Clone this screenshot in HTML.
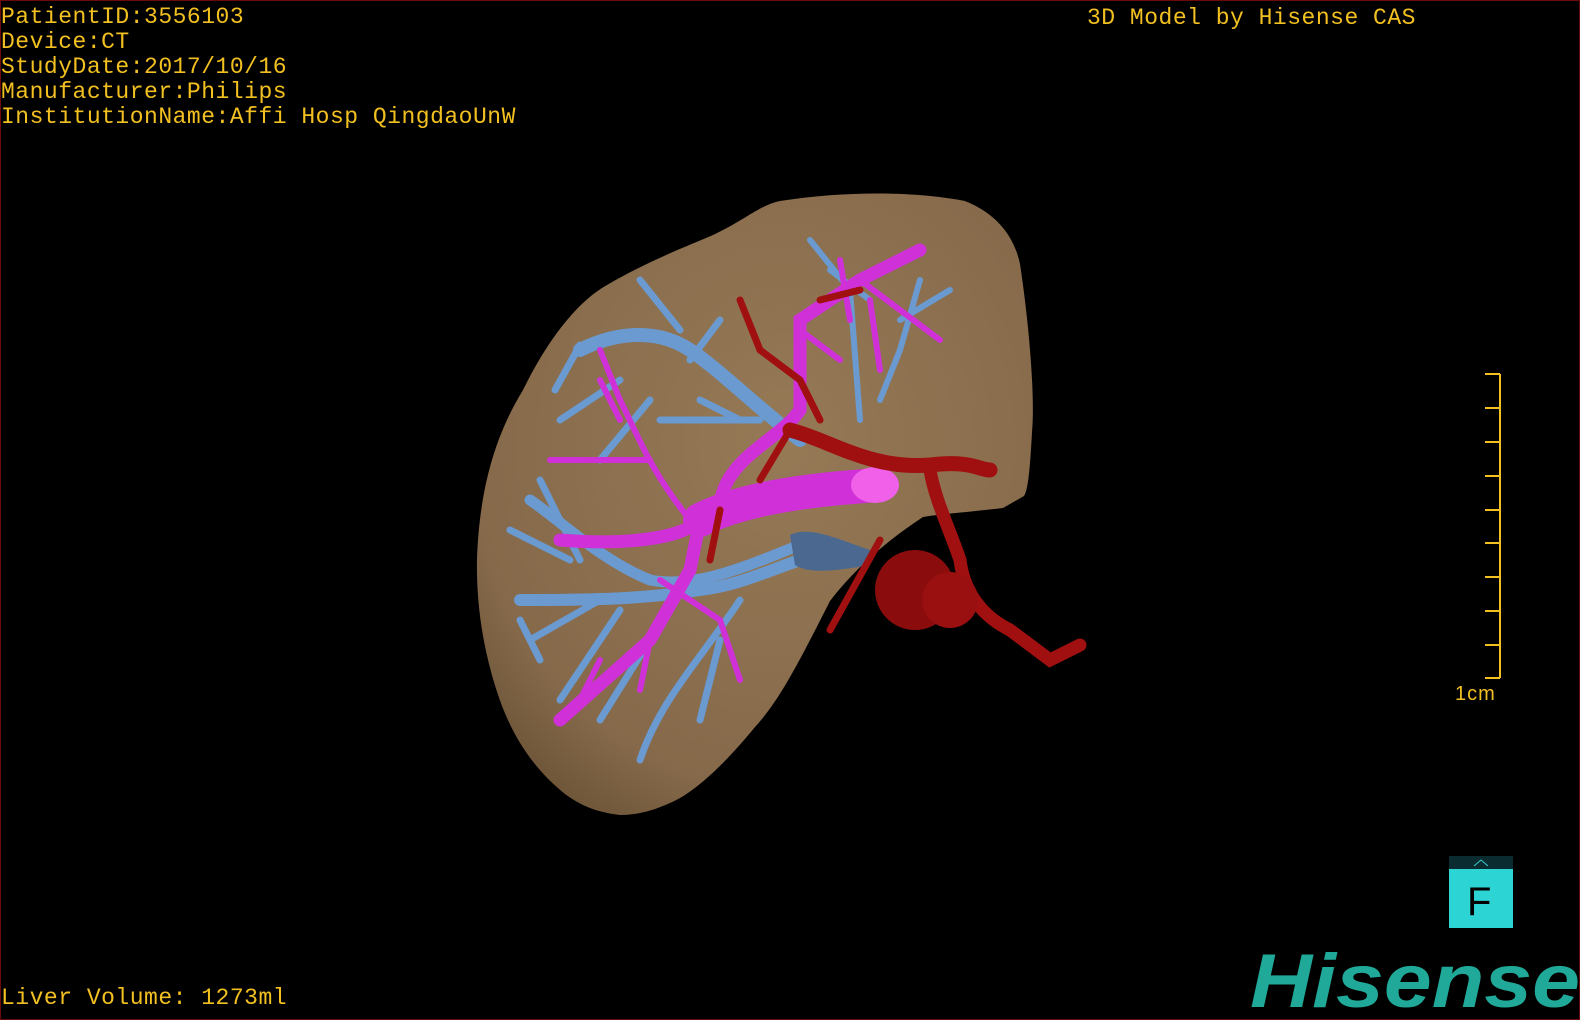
<!DOCTYPE html>
<html><head><meta charset="utf-8"><style>
html,body{margin:0;padding:0;background:#000;}
#f{position:relative;width:1578px;height:1018px;border:1px solid #6a0a0a;overflow:hidden;background:#000;font-family:"Liberation Mono",monospace;color:#f2c020;}
.t{position:absolute;font-size:23px;line-height:25px;white-space:pre;letter-spacing:0.5px}
</style></head><body><div id="f">
<div class="t" style="left:0;top:4px">PatientID:3556103
Device:CT
StudyDate:2017/10/16
Manufacturer:Philips
InstitutionName:Affi Hosp QingdaoUnW</div>
<div class="t" style="left:1086px;top:5px">3D Model by Hisense CAS</div>
<div class="t" style="left:0;top:985px">Liver Volume: 1273ml</div>
<svg width="1580" height="1020" style="position:absolute;left:-1px;top:-1px">
<defs><radialGradient id="lg" cx="0.55" cy="0.4" r="0.7"><stop offset="0" stop-color="#967a56"/><stop offset="0.8" stop-color="#85694a"/><stop offset="1" stop-color="#6e5538"/></radialGradient></defs>
<path d="M477,559 C480,470 505,420 523,390 C550,335 580,300 607,285 C650,260 690,245 713,235 C745,220 760,205 780,201 C850,190 920,192 965,201 C1000,215 1015,240 1020,264 C1030,330 1035,400 1032,432 C1030,470 1028,490 1024,496 L1003,508 C970,512 940,514 923,517 C880,545 850,575 830,601 C800,660 780,700 755,727 C720,770 690,795 670,803 C650,812 635,815 620,815 C595,812 580,805 565,794 C535,770 515,740 502,706 C485,660 476,610 477,559Z" fill="url(#lg)"/>
<g fill="none" stroke-linecap="round" stroke="#6a9ad0">
<path d="M580,350 C620,330 660,330 690,350 C720,370 760,410 800,440" stroke-width="14"/>
<path d="M640,280 L680,330 M580,345 L555,390 M620,380 L560,420 M650,400 L600,460 M690,360 L720,320 M700,400 L740,420 M660,420 L760,420" stroke-width="7"/>
<path d="M530,500 C560,520 600,560 650,580 C700,590 760,560 800,545" stroke-width="11"/>
<path d="M520,600 C580,600 640,600 700,590 C740,585 770,570 800,560" stroke-width="12"/>
<path d="M540,480 L580,560 M510,530 L570,560 M530,640 L600,600 M560,700 L620,610 M640,760 C660,700 700,660 740,600 M600,720 L650,640 M700,720 L720,640 M540,660 L520,620" stroke-width="7"/>
<path d="M810,240 L850,290 M850,290 L860,420 M920,280 L900,350 L880,400 M950,290 L900,320 M830,270 L870,300" stroke-width="6"/>
</g>
<path d="M790,535 C810,525 840,540 870,550 L870,565 C840,570 810,575 795,565Z" fill="#4a6890"/>
<g fill="none" stroke-linecap="round" stroke="#d030d8">
<path d="M700,520 C740,500 800,490 880,485" stroke-width="34"/>
<path d="M700,520 C680,540 620,545 560,540 M700,520 L690,570 L650,640 L560,720 M720,510 C720,460 780,440 800,410 L800,320 L860,280 L920,250" stroke-width="13"/>
<path d="M690,520 C650,470 640,440 620,400 L600,350 M650,460 L550,460 M620,420 L600,380 M660,580 L720,620 L740,680 M650,640 L640,690 M600,660 L580,700 M860,280 L900,310 L940,340 M840,260 L850,320 M870,300 L880,370 M800,330 L840,360" stroke-width="6"/>
</g>
<ellipse cx="875" cy="485" rx="24" ry="18" fill="#f060e8"/>
<g fill="none" stroke-linecap="round" stroke="#a01010">
<path d="M790,430 C830,440 870,470 930,465 C970,460 980,470 990,470" stroke-width="15"/>
<path d="M930,470 C935,500 950,530 960,560 C965,600 990,620 1010,630 L1050,660 L1080,645" stroke-width="13"/>
<path d="M880,540 L830,630 M740,300 L760,350 L800,380 L820,420 M820,300 L860,290 M720,510 L710,560 M790,430 L760,480" stroke-width="7"/>
</g>
<ellipse cx="915" cy="590" rx="40" ry="40" fill="#8a0c0c"/>
<ellipse cx="950" cy="600" rx="28" ry="28" fill="#9a1010"/>
<g stroke="#f2c020" stroke-width="2" fill="none">
<path d="M1500,374 V678 M1485,374 H1500 M1485,408 H1500 M1485,442 H1500 M1485,476 H1500 M1485,510 H1500 M1485,543 H1500 M1485,577 H1500 M1485,611 H1500 M1485,645 H1500 M1485,678 H1500"/>
</g>
<text x="1455" y="700" font-family="Liberation Sans,sans-serif" font-size="20" fill="#f2c020" letter-spacing="1">1cm</text>
<rect x="1449" y="856" width="64" height="13" fill="#0a2c30"/>
<path d="M1474,866 L1481,860 L1488,866" stroke="#3cc" fill="none"/>
<rect x="1449" y="869" width="64" height="59" fill="#2dd4d4"/>
<text x="1467" y="915" font-family="Liberation Sans,sans-serif" font-size="40" fill="#000">F</text>
<text x="1250" y="1007" font-family="Liberation Sans,sans-serif" font-weight="bold" font-style="italic" font-size="76" fill="#20a898" textLength="330" lengthAdjust="spacingAndGlyphs">Hisense</text>
</svg>
</div></body></html>
